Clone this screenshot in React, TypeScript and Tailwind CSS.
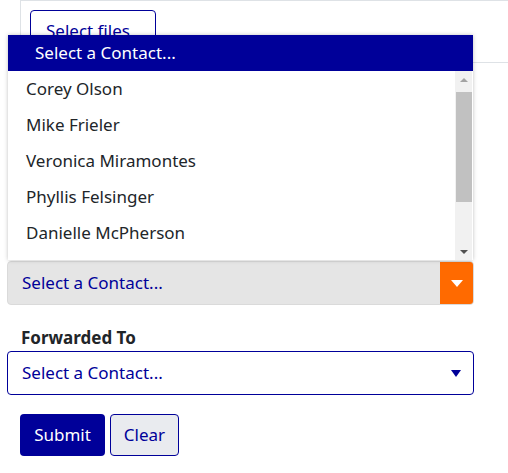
import React from "react";

const names = ["Corey Olson", "Mike Frieler", "Veronica Miramontes", "Phyllis Felsinger", "Danielle McPherson"];

export default function App() {
  return (
    <div className="relative w-[508px] h-[473px] bg-white overflow-hidden font-['Noto_Sans',sans-serif] text-[17px]">
      <div className="ml-[20px] mr-[-10px] h-[63px] border border-[#dee2e6] pt-[9px] pl-[9px]">
        <button className="h-[42px] w-[126px] border border-[#000099] rounded-[4px] text-[#000099] text-left pl-[15px] bg-white">
          Select files
        </button>
      </div>
      <div className="relative mt-[198px] ml-[7px] w-[467px]">
        <div className="absolute left-[1px] top-[-226px] w-[465px] h-[225px] bg-white shadow-[0_0_4px_rgba(0,0,0,0.25)] flex flex-col z-10">
          <div className="h-[36px] bg-[#000099] text-white flex items-center pl-[27px] shrink-0">Select a Contact...</div>
          <div className="flex flex-1">
            <div className="flex-1 text-[#212529]">
              {names.map((n) => (
                <div key={n} className="h-[36px] flex items-center pl-[18px]">{n}</div>
              ))}
            </div>
            <div className="w-[17px] mr-[1px] bg-[#f1f1f1] flex flex-col items-center">
              <div className="h-[17px] w-full flex items-center justify-center">
                <div className="w-0 h-0 border-l-[4px] border-r-[4px] border-b-[4px] border-l-transparent border-r-transparent border-b-[#a3a3a3]" />
              </div>
              <div className="w-[16px] h-[110px] mt-[4px] bg-[#c1c1c1]" />
              <div className="flex-1" />
              <div className="h-[17px] w-full flex items-center justify-center">
                <div className="w-0 h-0 border-l-[4px] border-r-[4px] border-t-[4px] border-l-transparent border-r-transparent border-t-[#505050]" />
              </div>
            </div>
          </div>
        </div>
        <div className="h-[44px] rounded-[4px] border border-[#dadada] bg-[#e5e5e5] flex items-stretch overflow-hidden">
          <div className="flex-1 flex items-center pl-[14px] text-[#000099]">Select a Contact...</div>
          <div className="w-[33px] bg-[#ff6a00] flex items-center justify-center">
            <div className="w-0 h-0 border-l-[6px] border-r-[6px] border-t-[7px] border-l-transparent border-r-transparent border-t-white" />
          </div>
        </div>
      </div>
      <div className="mt-[21px] ml-[21px] font-bold text-[#212529] leading-[24px]">Forwarded To</div>
      <div className="ml-[7px] mt-[1px] w-[467px] h-[44px] rounded-[4px] border border-[#000099] flex items-center justify-between pl-[14px] pr-[12px] text-[#000099]">
        <span>Select a Contact...</span>
        <div className="w-0 h-0 border-l-[5px] border-r-[5px] border-t-[7px] border-l-transparent border-r-transparent border-t-[#000099]" />
      </div>
      <div className="mt-[19px] ml-[20px] flex gap-[5px]">
        <button className="w-[85px] h-[42px] rounded-[4px] bg-[#000099] text-white">Submit</button>
        <button className="w-[69px] h-[42px] rounded-[4px] bg-[#e9ebef] border border-[#000099] text-[#000099]">Clear</button>
      </div>
    </div>
  );
}
